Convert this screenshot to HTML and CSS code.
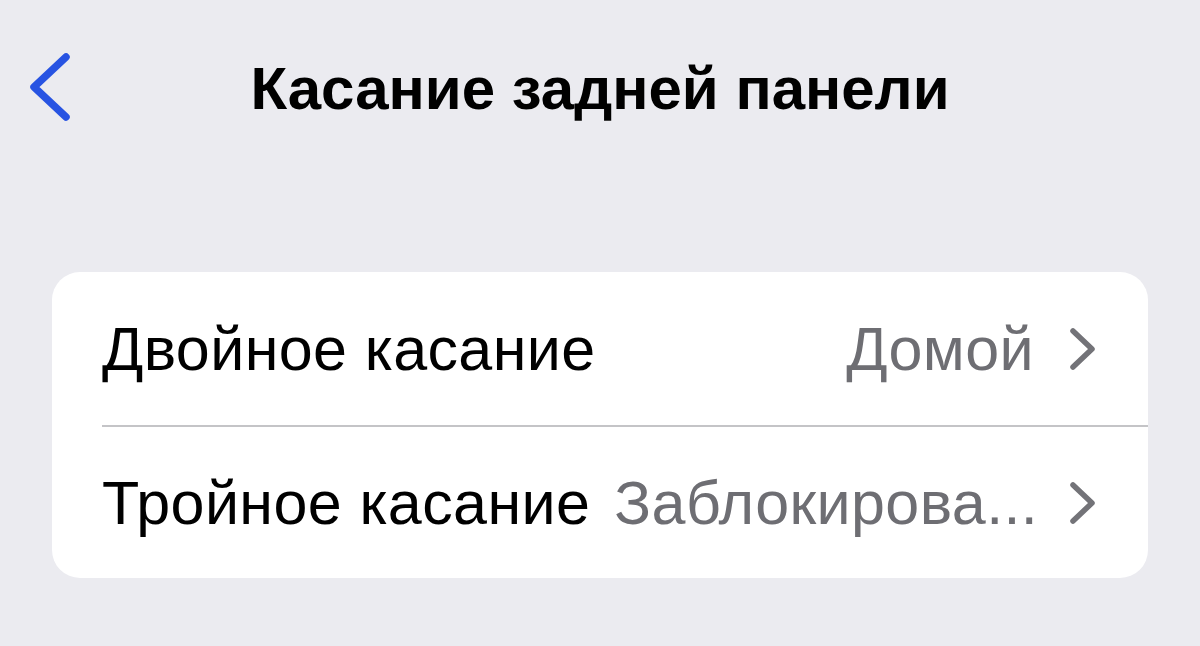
FILE: index.html
```html
<!DOCTYPE html>
<html lang="ru">
<head>
    <meta charset="UTF-8">
    <meta name="viewport" content="width=device-width, initial-scale=1.0">
    <title>Касание задней панели</title>
    <link rel="stylesheet" href="styles.css">
</head>
<body>
    <header class="nav-bar">
        <button class="back-button" aria-label="Назад">
            <svg width="50" height="72" viewBox="0 0 50 72">
                <polyline points="37,6 5,36 37,66" fill="none" stroke="#2753e2" stroke-width="7.5" stroke-linecap="round" stroke-linejoin="round"/>
            </svg>
        </button>
        <h1>Касание задней панели</h1>
    </header>

    <div class="settings-group">
        <div class="settings-row">
            <span class="row-label">Двойное касание</span>
            <span class="row-value">Домой</span>
            <svg class="chevron" width="30" height="44" viewBox="0 0 30 44">
                <polyline points="5,4 24,22 5,40" fill="none" stroke="#737378" stroke-width="5.5" stroke-linecap="round" stroke-linejoin="round"/>
            </svg>
        </div>
        <div class="settings-row">
            <span class="row-label">Тройное касание</span>
            <span class="row-value">Заблокирова...</span>
            <svg class="chevron" width="30" height="44" viewBox="0 0 30 44">
                <polyline points="5,4 24,22 5,40" fill="none" stroke="#737378" stroke-width="5.5" stroke-linecap="round" stroke-linejoin="round"/>
            </svg>
        </div>
    </div>
</body>
</html>
```

FILE: styles.css
```css
* {
    margin: 0;
    padding: 0;
    box-sizing: border-box;
}
body {
    background-color: #ebebf0;
    font-family: 'Liberation Sans', Arial, sans-serif;
    width: 1200px;
    height: 646px;
    overflow: hidden;
}
.nav-bar {
    position: relative;
    height: 176px;
    padding-top: 53px;
    display: flex;
    justify-content: center;
}
.back-button {
    position: absolute;
    left: 29px;
    top: 51px;
    background: none;
    border: none;
}
.back-button svg {
    display: block;
}
h1 {
    font-size: 60px;
    font-weight: bold;
    color: #000;
    line-height: 72px;
    letter-spacing: 0;
}
.settings-group {
    margin: 96px 52px 0 52px;
    background-color: #ffffff;
    border-radius: 28px;
    overflow: hidden;
}
.settings-row {
    display: flex;
    align-items: center;
    height: 153px;
    margin-left: 50px;
    padding-right: 50px;
    font-size: 61px;
    letter-spacing: 0.4px;
}
.settings-row + .settings-row {
    border-top: 2px solid #c4c4c7;
}
.row-label {
    color: #000;
    white-space: nowrap;
    flex-shrink: 0;
    margin-right: 24px;
}
.row-value {
    color: #6e6e73;
    flex: 1;
    min-width: 0;
    text-align: right;
    white-space: nowrap;
    margin-right: 34px;
}
.chevron {
    flex-shrink: 0;
    display: block;
}
```
